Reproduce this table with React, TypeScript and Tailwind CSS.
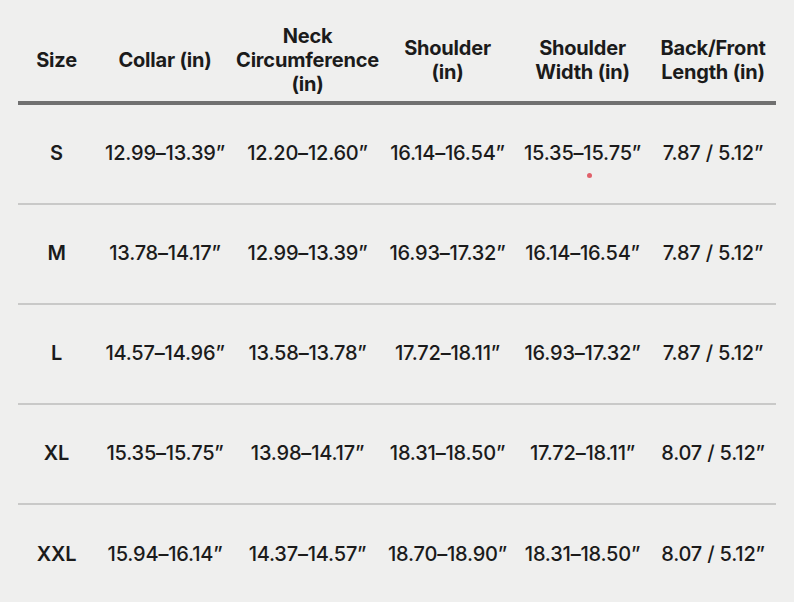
import React from "react";

const COLS = ["w-[77px]", "w-[140px]", "w-[145px]", "w-[135px]", "w-[135px]", "w-[126px]"];

const HEAD = [
  ["Size"],
  ["Collar (in)"],
  ["Neck", "Circumference", "(in)"],
  ["Shoulder", "(in)"],
  ["Shoulder", "Width (in)"],
  ["Back/Front", "Length (in)"],
];

const ROWS = [
  ["S", "12.99–13.39”", "12.20–12.60”", "16.14–16.54”", "15.35–15.75”", "7.87 / 5.12”"],
  ["M", "13.78–14.17”", "12.99–13.39”", "16.93–17.32”", "16.14–16.54”", "7.87 / 5.12”"],
  ["L", "14.57–14.96”", "13.58–13.78”", "17.72–18.11”", "16.93–17.32”", "7.87 / 5.12”"],
  ["XL", "15.35–15.75”", "13.98–14.17”", "18.31–18.50”", "17.72–18.11”", "8.07 / 5.12”"],
  ["XXL", "15.94–16.14”", "14.37–14.57”", "18.70–18.90”", "18.31–18.50”", "8.07 / 5.12”"],
];

export default function App() {
  return (
    <div
      className="relative h-[602px] w-[794px] overflow-hidden bg-[#efefee] px-[18px] text-[#1b1b1b]"
      style={{ fontFamily: "Inter, 'Noto Sans', sans-serif" }}
    >
      {/* header */}
      <div className="flex h-[101px] items-center pt-[18px] text-[20px] font-bold leading-[24px] tracking-[-0.2px]">
        {HEAD.map((lines, i) => (
          <div key={i} className={`${COLS[i]} flex flex-col items-center text-center`}>
            {lines.map((l) => (
              <span key={l} className="whitespace-nowrap">{l}</span>
            ))}
          </div>
        ))}
      </div>
      <div className="h-[4px] bg-[#707070]" />

      {/* rows */}
      {ROWS.map((row, r) => (
        <div
          key={r}
          className={`flex h-[100px] items-center pb-[2px] text-[20px] font-medium tracking-[-0.2px] ${
            r < ROWS.length - 1 ? "border-b-2 border-[#c9c9c8]" : ""
          }`}
        >
          {row.map((cell, i) => (
            <div key={i} className={`${COLS[i]} whitespace-nowrap text-center ${i === 0 ? "font-semibold" : ""}`}>
              {cell}
            </div>
          ))}
        </div>
      ))}

      <span className="absolute left-[587px] top-[173px] h-[5px] w-[5px] rounded-full bg-[#e0606a]" />
    </div>
  );
}
